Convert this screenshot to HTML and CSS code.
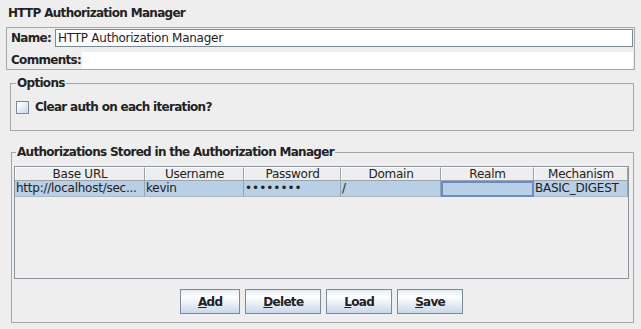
FILE: index.html
```html
<!DOCTYPE html>
<html lang="en">
<head>
    <meta charset="UTF-8">
    <title>HTTP Authorization Manager</title>
    <link rel="stylesheet" href="styles.css">
</head>
<body>
    <div class="title">HTTP Authorization Manager</div>

    <!-- Name / comments block -->
    <div class="name-box">
        <div class="name-row">
            <label for="name">Name:</label>
            <input type="text" id="name" class="name-field" value="HTTP Authorization Manager">
        </div>
        <div class="comment-row">
            <label for="comments">Comments:</label>
            <div id="comments" class="comment-field"></div>
        </div>
    </div>

    <fieldset class="group options">
        <legend>Options</legend>
        <div class="check-row">
            <span class="checkbox"></span>
            <span>Clear auth on each iteration?</span>
        </div>
    </fieldset>

    <fieldset class="group auths">
        <legend>Authorizations Stored in the Authorization Manager</legend>
        <div class="table">
            <div class="head">
                <div class="th">Base URL</div>
                <div class="th">Username</div>
                <div class="th">Password</div>
                <div class="th">Domain</div>
                <div class="th">Realm</div>
                <div class="th">Mechanism</div>
            </div>
            <div class="row selected">
                <div class="td">http://localhost/sec...</div>
                <div class="td">kevin</div>
                <div class="td dots">&bull;&bull;&bull;&bull;&bull;&bull;&bull;&bull;</div>
                <div class="td">/</div>
                <div class="td focus"></div>
                <div class="td">BASIC_DIGEST</div>
            </div>
        </div>

        <div class="button-group">
            <button><u>A</u>dd</button>
            <button><u>D</u>elete</button>
            <button><u>L</u>oad</button>
            <button><u>S</u>ave</button>
        </div>
    </fieldset>
</body>
</html>
```

FILE: styles.css
```css
* {
    box-sizing: border-box;
    margin: 0;
    padding: 0;
}

body {
    font-family: 'DejaVu Sans', sans-serif;
    font-size: 12px;
    line-height: 15px;
    letter-spacing: -0.25px;
    color: #222;
    background-color: #eeeeee;
    width: 641px;
    height: 329px;
    padding-top: 6px;
    overflow: hidden;
}

/* bold labels are narrower in the original look */
.title,
label,
.group legend,
.check-row,
button {
    font-weight: bold;
    letter-spacing: -0.7px;
}

.title {
    padding-left: 8px;
}

.name-box {
    margin: 6px 6px 0 6px;
    border: 1px solid #a6a6a6;
    padding: 1px 1px 0 4px;
}

.name-row,
.comment-row {
    display: flex;
    align-items: center;
}

.name-row {
    height: 18px;
    margin-bottom: 5px;
}

.name-field {
    flex: 1;
    height: 18px;
    margin-left: 4px;
    border: 1px solid #7a8a99;
    background: #fff;
    font-family: inherit;
    font-size: 12px;
    letter-spacing: -0.25px;
    color: #222;
    padding: 0 2px;
    outline: none;
}

.comment-row {
    height: 17px;
}

.comment-field {
    flex: 1;
    height: 17px;
    margin-left: 1px;
    background: #fff;
}

.group {
    border: 1px solid #a6a6a6;
    margin-right: 7px;
    padding: 0 4px;
}

.group legend {
    padding: 0 1px;
}

.options {
    margin-top: 6px;
    margin-left: 10px;
    padding-top: 9px;
    padding-bottom: 15px;
    padding-left: 5px;
}

.check-row {
    display: flex;
    align-items: center;
    gap: 6px;
}

.checkbox {
    width: 13px;
    height: 13px;
    border: 1px solid #7a8a99;
    background: linear-gradient(135deg, #ffffff 10%, #c8d8ea 100%);
}

.auths {
    margin-top: 14px;
    margin-left: 11px;
    padding: 6px 4px 8px 2px;
}

.auths legend {
    margin-left: 2px;
}

.table {
    height: 113px;
    border: 1px solid #8a949e;
}

.head,
.row {
    display: grid;
    grid-template-columns: 130px 99px 97px 100px 93px 94px;
}

.head {
    height: 14px;
    border-bottom: 1px solid #9aa3ab;
}

.th {
    text-align: center;
    line-height: 13px;
    border-right: 1px solid #9aa3ab;
    border-left: 1px solid #fff;
    border-top: 1px solid #fff;
    height: 13px;
}

.row {
    height: 16px;
}

.selected {
    background-color: #b8cfe5;
}

.td {
    line-height: 15px;
    padding-left: 1px;
    border-right: 1px solid #9aa3ab;
    border-bottom: 1px solid #b0b8c0;
    white-space: nowrap;
    overflow: hidden;
}

.td.dots {
    padding-left: 1px;
    letter-spacing: 0;
}

.td.focus {
    border: 2px solid #6a8bc6;
}

.button-group {
    display: flex;
    justify-content: center;
    gap: 5px;
    margin-top: 10px;
}

button {
    height: 25px;
    padding: 0 17px;
    font-family: inherit;
    font-size: 12px;
    color: #222;
    border: 1px solid #7a8a99;
    background: linear-gradient(#e3ecf5 0%, #ffffff 30%, #c8d8ea 100%);
}

button u {
    text-decoration-thickness: 1px;
}
```
